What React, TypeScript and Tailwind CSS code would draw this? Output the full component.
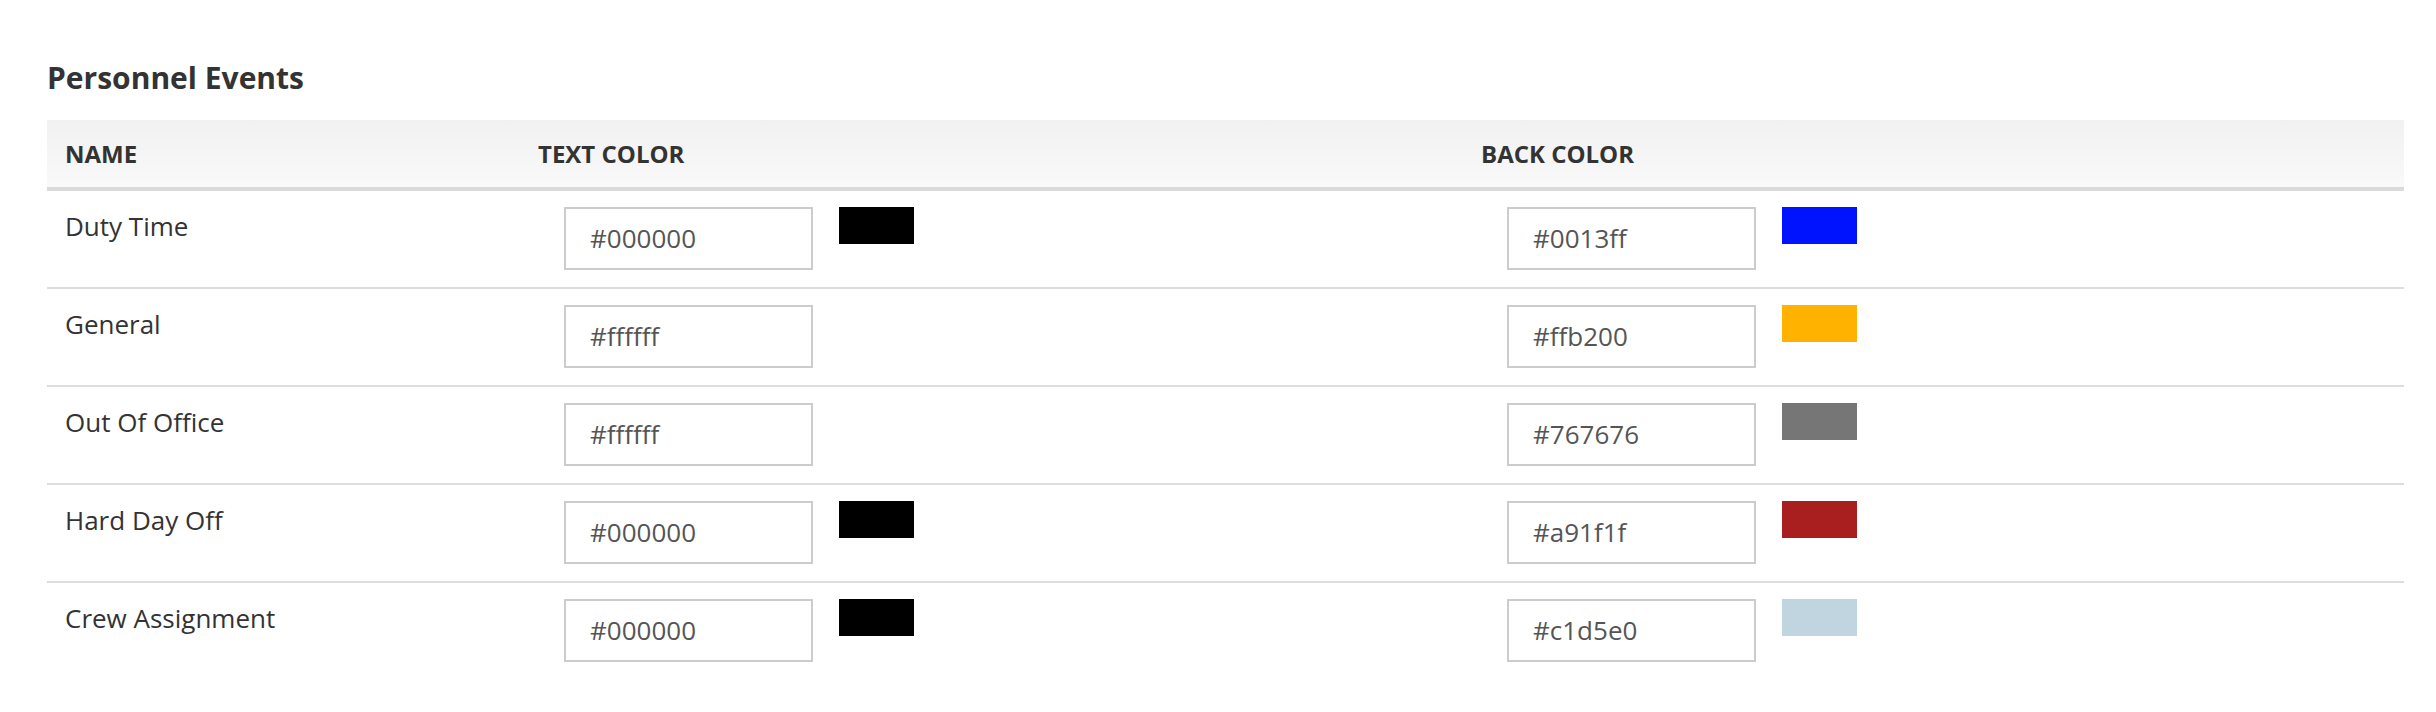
const rows = [
  { name: "Duty Time", text: "#000000", back: "#0013ff" },
  { name: "General", text: "#ffffff", back: "#ffb200" },
  { name: "Out Of Office", text: "#ffffff", back: "#767676" },
  { name: "Hard Day Off", text: "#000000", back: "#a91f1f" },
  { name: "Crew Assignment", text: "#000000", back: "#c1d5e0" },
];

function ColorCell({ value }: { value: string }) {
  return (
    <div className="flex items-start pl-[46px] pt-4 pb-[17px]">
      <div className="w-[249px] h-[63px] border-2 border-[#cccccc] bg-white flex items-center pl-[24px] text-[26px] text-[#555555]">
        {value}
      </div>
      <div className="w-[75px] h-[37px] ml-[26px]" style={{ backgroundColor: value }} />
    </div>
  );
}

export default function App() {
  return (
    <div className="min-h-screen bg-white pl-[47px] pr-[32px] pt-[60px] font-['Open_Sans',sans-serif]">
      <h2 className="text-[30px] leading-[36px] font-bold text-[#333333]">Personnel Events</h2>

      <div className="mt-[24px]">
        {/* header */}
        <div className="grid grid-cols-[471px_943px_1fr] h-[71px] border-b-4 border-[#dadada] bg-gradient-to-b from-[#f1f1f1] to-[#f9f9f9] text-[24px] font-bold text-[#333333]">
          <div className="flex items-center pl-[18px]">NAME</div>
          <div className="flex items-center pl-[20px]">TEXT COLOR</div>
          <div className="flex items-center pl-[20px]">BACK COLOR</div>
        </div>

        {rows.map((r, i) => (
          <div
            key={r.name}
            className={
              "grid grid-cols-[471px_943px_1fr] " +
              (i < rows.length - 1 ? "border-b-2 border-[#dddddd]" : "")
            }
          >
            <div className="pl-[18px] pt-[16px] text-[26px] leading-[39px] text-[#333333]">{r.name}</div>
            <ColorCell value={r.text} />
            <ColorCell value={r.back} />
          </div>
        ))}
      </div>
    </div>
  );
}
